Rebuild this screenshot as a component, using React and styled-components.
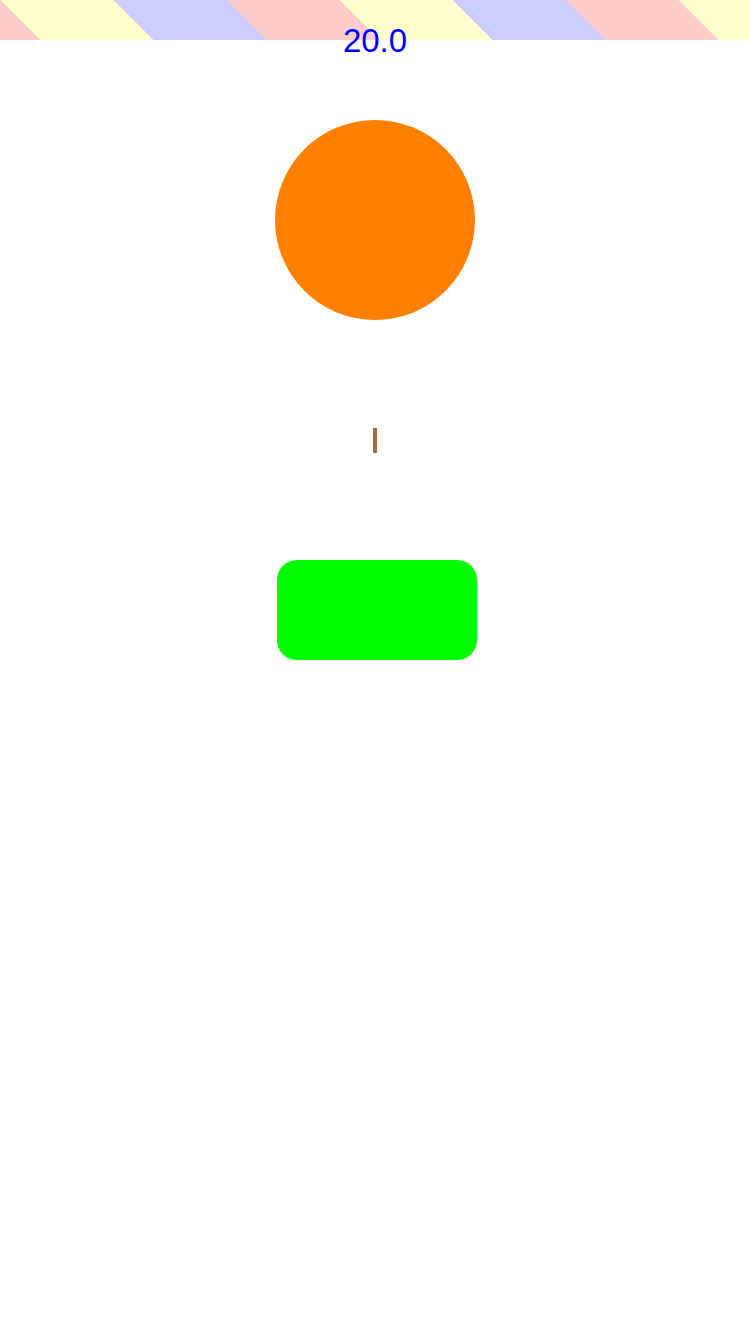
import React from 'react';
import styled, { createGlobalStyle } from 'styled-components';

const GlobalStyle = createGlobalStyle`
  html, body {
    margin: 0;
    padding: 0;
    background: #fff;
  }
  body {
    font-family: 'Liberation Sans', Arial, sans-serif;
  }
`;

function App() {
  return (
    <>
      <GlobalStyle />
      <Page>
        <Header>
          <Stripes />
          <Value>20.0</Value>
        </Header>
        <Ball />
        <Cursor />
        <GreenButton />
      </Page>
    </>
  );
}

export default App;

const Page = styled.div`
  display: flex;
  flex-direction: column;
  align-items: center;
  width: 750px;
  min-height: 1334px;
`;

const Header = styled.div`
  position: relative;
  width: 100%;
  height: 40px;
`;

const Stripes = styled.div`
  height: 40px;
  background: repeating-linear-gradient(
    45deg,
    #ffcccc 0 28.3px,
    #ffffcc 28.3px 108.3px,
    #ccccff 108.3px 188.3px,
    #ffcccc 188.3px 240px
  );
`;

const Value = styled.div`
  position: absolute;
  left: 0;
  right: 0;
  top: 22px;
  text-align: center;
  font-size: 33px;
  line-height: 1.15;
  color: #0000ff;
`;

const Ball = styled.div`
  width: 200px;
  height: 200px;
  margin-top: 80px;
  border-radius: 50%;
  background: #ff8000;
`;

const Cursor = styled.div`
  width: 4px;
  height: 25px;
  margin-top: 108px;
  background: #a86a35;
`;

const GreenButton = styled.div`
  width: 200px;
  height: 100px;
  margin-top: 107px;
  margin-left: 4px;
  border-radius: 20px;
  background: #00ff00;
`;
